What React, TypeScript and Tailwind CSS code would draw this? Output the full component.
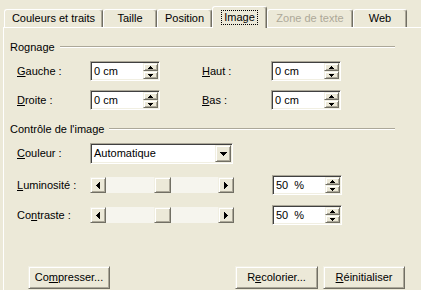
const raised =
  'border border-t-[#F1EFE2] border-l-[#F1EFE2] border-r-[#716F64] border-b-[#716F64] shadow-[inset_1px_1px_0_#fff,inset_-1px_-1px_0_#ACA899] bg-[#ECE9D8]';
const sunken =
  'border border-t-[#ACA899] border-l-[#ACA899] border-r-white border-b-white shadow-[inset_1px_1px_0_#404040,inset_-1px_-1px_0_#F1EFE2] bg-white';

type Dir = 'up' | 'down' | 'left' | 'right';

const Arrow = ({ dir }: { dir: Dir }) => {
  if (dir === 'up')
    return (
      <svg width="5" height="3" viewBox="0 0 5 3" shapeRendering="crispEdges">
        <polygon points="0,3 5,3 2.5,0" fill="#000" />
      </svg>
    );
  if (dir === 'down')
    return (
      <svg width="5" height="3" viewBox="0 0 5 3" shapeRendering="crispEdges">
        <polygon points="0,0 5,0 2.5,3" fill="#000" />
      </svg>
    );
  if (dir === 'left')
    return (
      <svg width="4" height="7" viewBox="0 0 4 7" shapeRendering="crispEdges">
        <polygon points="4,0 4,7 0,3.5" fill="#000" />
      </svg>
    );
  return (
    <svg width="4" height="7" viewBox="0 0 4 7" shapeRendering="crispEdges">
      <polygon points="0,0 0,7 4,3.5" fill="#000" />
    </svg>
  );
};

type TabProps = { label: string; w: string; active?: boolean; disabled?: boolean };

const Tab = ({ label, w, active, disabled }: TabProps) => (
  <div
    className={`${w} ${active ? 'h-[22px] relative z-10 -mb-px bg-[#ECE9D8]' : 'h-[18px]'} ${
      disabled ? 'text-[#ACA899]' : ''
    } flex items-center justify-center border-t border-l border-r border-t-white border-l-white border-r-[#716F64] rounded-t-[3px] shadow-[inset_-1px_0_0_#ACA899]`}
  >
    {active ? <span className="border border-dotted border-black px-[2px] leading-[13px]">{label}</span> : label}
  </div>
);

const Mnemonic = ({ pre = '', u, post }: { pre?: string; u: string; post: string }) => (
  <span>
    {pre}
    <u>{u}</u>
    {post}
  </span>
);

const GroupHeader = ({ title, className }: { title: string; className: string }) => (
  <div className={`flex items-center h-[14px] w-[385px] ${className}`}>
    <span>{title}</span>
    <div className="ml-[5px] flex-1 h-[2px] border-t border-t-[#ACA899] border-b border-b-white" />
  </div>
);

const SpinBox = ({ value, className = '' }: { value: string; className?: string }) => (
  <div className={`${sunken} w-[70px] h-[20px] flex p-[1px] ${className}`}>
    <div className="flex-1 pl-[2px] leading-[16px]">{value}</div>
    <div className="flex flex-col w-[15px]">
      <div className={`${raised} h-[8px] flex items-center justify-center`}>
        <Arrow dir="up" />
      </div>
      <div className={`${raised} h-[8px] flex items-center justify-center`}>
        <Arrow dir="down" />
      </div>
    </div>
  </div>
);

const Slider = () => (
  <div className="flex w-[144px] h-[16px]">
    <div className={`${raised} w-[16px] h-[16px] flex items-center justify-center`}>
      <Arrow dir="left" />
    </div>
    <div className="flex-1 flex justify-center bg-[#F6F5EE]">
      <div className={`${raised} w-[17px] h-[16px]`} />
    </div>
    <div className={`${raised} w-[16px] h-[16px] flex items-center justify-center`}>
      <Arrow dir="right" />
    </div>
  </div>
);

const PushButton = ({ w, className = '', children }: { w: string; className?: string; children: React.ReactNode }) => (
  <div className={`${raised} ${w} h-[23px] flex items-center justify-center ${className}`}>{children}</div>
);

export default function App() {
  return (
    <div className="w-[421px] h-[290px] overflow-hidden bg-[#ECE9D8] text-black text-[11px] leading-[13px] font-['Liberation_Sans',Arial,sans-serif] flex flex-col">
      <div className="h-[27px] flex items-end pl-[4px]">
        <Tab label="Couleurs et traits" w="w-[99px]" />
        <Tab label="Taille" w="w-[54px]" />
        <Tab label="Position" w="w-[55px]" />
        <Tab label="Image" w="w-[55px]" active />
        <Tab label="Zone de texte" w="w-[86px]" disabled />
        <Tab label="Web" w="w-[54px]" />
      </div>

      <div className="ml-[3px] flex-1 border-t border-l border-white pl-[6px]">
        <GroupHeader title="Rognage" className="mt-[12px]" />

        <div className="flex items-center h-[20px] mt-[7px] pl-[7px]">
          <div className="w-[73px]">
            <Mnemonic u="G" post="auche :" />
          </div>
          <SpinBox value="0 cm" />
          <div className="w-[69px] ml-[42px]">
            <Mnemonic u="H" post="aut :" />
          </div>
          <SpinBox value="0 cm" />
        </div>

        <div className="flex items-center h-[20px] mt-[9px] pl-[7px]">
          <div className="w-[73px]">
            <Mnemonic u="D" post="roite :" />
          </div>
          <SpinBox value="0 cm" />
          <div className="w-[69px] ml-[42px]">
            <Mnemonic u="B" post="as :" />
          </div>
          <SpinBox value="0 cm" />
        </div>

        <GroupHeader title="Contrôle de l'image" className="mt-[12px]" />

        <div className="flex items-center h-[21px] mt-[7px] pl-[7px]">
          <div className="w-[73px]">
            <Mnemonic u="C" post="ouleur :" />
          </div>
          <div className={`${sunken} w-[143px] h-[21px] flex p-[1px]`}>
            <div className="flex-1 pl-[2px] leading-[17px]">Automatique</div>
            <div className={`${raised} w-[16px] h-[17px] flex items-center justify-center`}>
              <svg width="7" height="4" viewBox="0 0 7 4" shapeRendering="crispEdges">
                <polygon points="0,0 7,0 3.5,4" fill="#000" />
              </svg>
            </div>
          </div>
        </div>

        <div className="flex items-center h-[20px] mt-[11px] pl-[7px]">
          <div className="w-[73px]">
            <Mnemonic u="L" post="uminosité :" />
          </div>
          <Slider />
          <SpinBox value="50  %" className="ml-[38px] whitespace-pre" />
        </div>

        <div className="flex items-center h-[20px] mt-[10px] pl-[7px]">
          <div className="w-[73px]">
            <Mnemonic pre="Co" u="n" post="traste :" />
          </div>
          <Slider />
          <SpinBox value="50  %" className="ml-[38px] whitespace-pre" />
        </div>

        <div className="flex mt-[41px]">
          <PushButton w="w-[82px]" className="ml-[18px]">
            <Mnemonic pre="Co" u="m" post="presser..." />
          </PushButton>
          <PushButton w="w-[83px]" className="ml-[125px]">
            <Mnemonic pre="R" u="e" post="colorier..." />
          </PushButton>
          <PushButton w="w-[82px]" className="ml-[5px]">
            <Mnemonic u="R" post="éinitialiser" />
          </PushButton>
        </div>
      </div>
    </div>
  );
}
